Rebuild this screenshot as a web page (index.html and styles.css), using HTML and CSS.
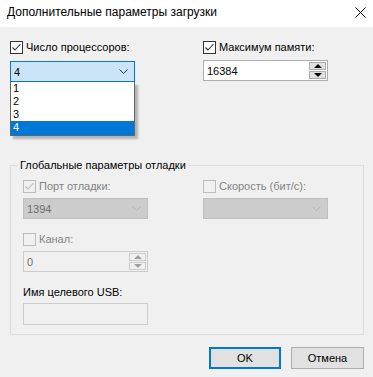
FILE: index.html
```html
<!DOCTYPE html>
<html lang="ru">

<head>
    <meta charset="UTF-8">
    <title>Дополнительные параметры загрузки</title>
    <link rel="stylesheet" href="styles.css">
</head>

<body>
    <div class="titlebar">
        <span class="title">Дополнительные параметры загрузки</span>
        <svg class="close" width="11" height="11" viewBox="0 0 11 11">
            <path d="M0.5 0.5 L10.5 10.5 M10.5 0.5 L0.5 10.5" stroke="#000" stroke-width="1" fill="none" />
        </svg>
    </div>

    <div class="dialog">
        <div class="top">
            <div class="col">
                <div class="check">
                    <span class="box">
                        <svg width="11" height="11" viewBox="0 0 11 11">
                            <path d="M1.5 5.5 L4 8 L9.5 2" stroke="#333" stroke-width="1.1" fill="none" />
                        </svg>
                    </span>
                    <span>Число процессоров:</span>
                </div>
                <div class="combo-wrap">
                    <div class="combo open">
                        <span>4</span>
                        <svg class="chev" width="9" height="5" viewBox="0 0 9 5">
                            <path d="M0.5 0.5 L4.5 4.5 L8.5 0.5" stroke="#333" stroke-width="1" fill="none" />
                        </svg>
                    </div>
                    <ul class="droplist">
                        <li>1</li>
                        <li>2</li>
                        <li>3</li>
                        <li class="sel">4</li>
                    </ul>
                </div>
            </div>
            <div class="col">
                <div class="check">
                    <span class="box">
                        <svg width="11" height="11" viewBox="0 0 11 11">
                            <path d="M1.5 5.5 L4 8 L9.5 2" stroke="#333" stroke-width="1.1" fill="none" />
                        </svg>
                    </span>
                    <span>Максимум памяти:</span>
                </div>
                <div class="spin">
                    <span class="spin-value">16384</span>
                    <div class="arrows">
                        <span class="arr"><i class="up"></i></span>
                        <span class="arr"><i class="down"></i></span>
                    </div>
                </div>
            </div>
        </div>

        <div class="group">
            <div class="group-title"><span>Глобальные параметры отладки</span></div>
            <div class="grid">
                <div class="col">
                    <div class="check disabled">
                        <span class="box">
                            <svg width="11" height="11" viewBox="0 0 11 11">
                                <path d="M1.5 5.5 L4 8 L9.5 2" stroke="#bcbcbc" stroke-width="1.1" fill="none" />
                            </svg>
                        </span>
                        <span>Порт отладки:</span>
                    </div>
                    <div class="combo off">
                        <span>1394</span>
                        <svg class="chev" width="9" height="5" viewBox="0 0 9 5">
                            <path d="M0.5 0.5 L4.5 4.5 L8.5 0.5" stroke="#b4b4b4" stroke-width="1" fill="none" />
                        </svg>
                    </div>

                    <div class="check disabled second">
                        <span class="box"></span>
                        <span>Канал:</span>
                    </div>
                    <div class="spin off">
                        <span class="spin-value">0</span>
                        <div class="arrows">
                            <span class="arr"><i class="up"></i></span>
                            <span class="arr"><i class="down"></i></span>
                        </div>
                    </div>

                    <div class="field-label">Имя целевого USB:</div>
                    <div class="text off"></div>
                </div>
                <div class="col">
                    <div class="check disabled">
                        <span class="box"></span>
                        <span>Скорость (бит/с):</span>
                    </div>
                    <div class="combo off">
                        <span></span>
                        <svg class="chev" width="9" height="5" viewBox="0 0 9 5">
                            <path d="M0.5 0.5 L4.5 4.5 L8.5 0.5" stroke="#b4b4b4" stroke-width="1" fill="none" />
                        </svg>
                    </div>
                </div>
            </div>
        </div>

        <div class="buttons">
            <button class="btn default">OK</button>
            <button class="btn">Отмена</button>
        </div>
    </div>
</body>

</html>
```

FILE: styles.css
```css
* {
    box-sizing: border-box;
}

body {
    margin: 0;
    width: 373px;
    height: 377px;
    background-color: #f0f0f0;
    font-family: "Liberation Sans", Arial, sans-serif;
    font-size: 11px;
    color: #000;
    overflow: hidden;
}

.titlebar {
    height: 27px;
    background-color: #fff;
    display: flex;
    align-items: center;
    justify-content: space-between;
    padding: 0 7px 3px 7px;
}

.title {
    font-size: 12px;
}

.close {
    margin-top: 1px;
}

.dialog {
    padding: 14px 9px 0 10px;
}

.top {
    display: grid;
    grid-template-columns: 193px 125px;
    height: 124px;
}

.check {
    display: flex;
    align-items: center;
    gap: 3px;
    height: 13px;
    line-height: 13px;
}

.box {
    width: 13px;
    height: 13px;
    border: 1px solid #333;
    background-color: #fff;
    display: flex;
    align-items: center;
    justify-content: center;
}

.check.disabled {
    color: #838383;
}

.check.disabled .box {
    border-color: #bcbcbc;
    background-color: #f0f0f0;
}

.combo-wrap {
    position: relative;
    margin-top: 7px;
}

.combo {
    width: 125px;
    height: 21px;
    border: 1px solid #adadad;
    display: flex;
    align-items: center;
    justify-content: space-between;
    padding: 0 6px 0 3px;
}

.combo.open {
    background-color: #cce4f7;
    border-color: #0078d7;
}

.combo.off {
    background-color: #cccccc;
    border-color: #bfbfbf;
    color: #6d6d6d;
    margin-top: 5px;
}

.droplist {
    position: absolute;
    left: 0;
    top: 21px;
    width: 125px;
    margin: 0;
    padding: 0;
    list-style: none;
    background-color: #fff;
    border: 1px solid #646464;
    border-top: none;
    box-shadow: 3px 3px 2px rgba(0, 0, 0, 0.25);
}

.droplist li {
    height: 13px;
    line-height: 13px;
    padding-left: 2px;
}

.droplist li.sel {
    background-color: #0078d7;
    color: #fff;
    height: 14px;
}

.spin {
    width: 125px;
    height: 21px;
    margin-top: 6px;
    border: 1px solid #adadad;
    background-color: #fff;
    display: flex;
    align-items: center;
    justify-content: space-between;
    padding-left: 3px;
}

.spin.off {
    background-color: #f0f0f0;
    border-color: #cccccc;
    color: #6d6d6d;
    margin-top: 5px;
}

.arrows {
    display: flex;
    flex-direction: column;
    gap: 1px;
    padding: 1px;
    width: 19px;
    height: 19px;
}

.arr {
    flex: 1;
    border: 1px solid #adadad;
    background-color: #e1e1e1;
    display: flex;
    align-items: center;
    justify-content: center;
}

.off .arr {
    border-color: #cccccc;
    background-color: #f0f0f0;
}

.up,
.down {
    width: 0;
    height: 0;
    border-left: 4px solid transparent;
    border-right: 4px solid transparent;
}

.up {
    border-bottom: 4px solid #000;
}

.down {
    border-top: 4px solid #000;
}

.off .up {
    border-bottom-color: #a0a0a0;
}

.off .down {
    border-top-color: #a0a0a0;
}

.group {
    border: 1px solid #dcdcdc;
    height: 170px;
    padding: 0 12px 0 12px;
}

.group-title {
    height: 13px;
    line-height: 13px;
    margin-top: -7px;
    margin-left: -5px;
}

.group-title span {
    background-color: #f0f0f0;
    padding: 0 2px;
}

.grid {
    display: grid;
    grid-template-columns: 180px 125px;
    margin-top: 8px;
}

.check.second {
    margin-top: 14px;
}

.field-label {
    height: 13px;
    line-height: 13px;
    margin-top: 14px;
}

.text {
    width: 125px;
    height: 22px;
    margin-top: 4px;
    border: 1px solid #cccccc;
    background-color: #f0f0f0;
}

.buttons {
    display: flex;
    justify-content: flex-end;
    gap: 10px;
    margin-top: 12px;
}

.btn {
    width: 73px;
    height: 22px;
    font-family: "Liberation Sans", Arial, sans-serif;
    font-size: 11px;
    color: #000;
    background-color: #e1e1e1;
    border: 1px solid #adadad;
    padding: 0;
}

.btn.default {
    width: 72px;
    border: 2px solid #0078d7;
}
```
